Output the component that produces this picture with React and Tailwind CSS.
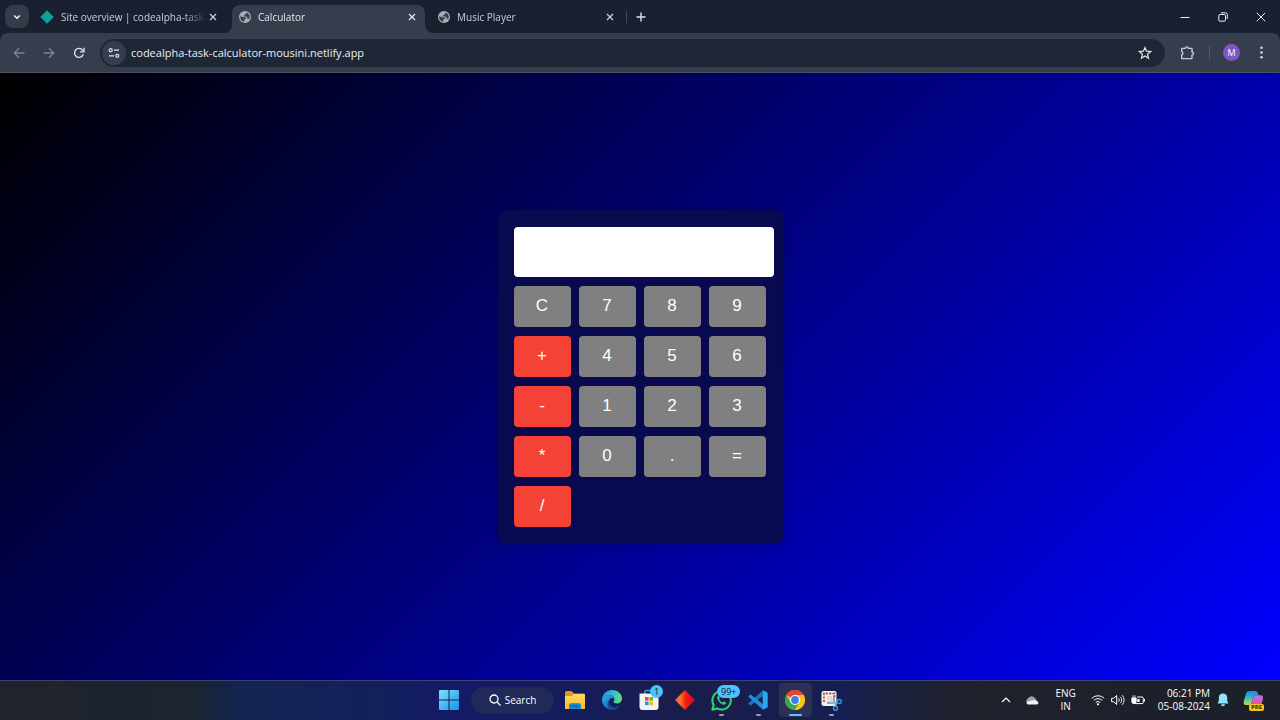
import React, { useState } from "react";

const Svg = ({ w = 16, h = w, box, className = "", children }) => (
  <svg width={w} height={h} viewBox={box || `0 0 ${w} ${h}`} fill="none" className={`shrink-0 ${className}`} aria-hidden="true">
    {children}
  </svg>
);

const GlobeIcon = () => (
  <Svg w={12}>
    <circle cx="6" cy="6" r="6" fill="#a9adb3" />
    <path d="M1.200 5.200 4 6.200h1.700c.8 0 1.200.6 1.200 1.200v.8H5.200v2.500C2.800 10.400 1.200 8.400 1.200 6zM7.500 1.500C7.500 2.700 7 3 6.200 3v.8c0 .5-.3.700-.8.700H4.600v1h2.800c.5 0 .8.3.8.8v1.200h.8c.6 0 .9.300 1 .8 1.300-1.800 1.100-5.300-2.500-6.800z" fill="#363e4d" />
  </Svg>
);

const NetlifyIcon = () => (
  <Svg w={14}>
    <path d="M7 .3 13.700 7 7 13.700.3 7z" fill="#0aa39a" />
  </Svg>
);

const CloseIcon = () => (
  <Svg w={8}>
    <path d="M1 1l6 6M7 1L1 7" stroke="currentColor" strokeWidth="1.300" />
  </Svg>
);

function Tab({ icon, title, active, className }) {
  return (
    <div
      className={
        active
          ? `relative flex h-7 items-center rounded-t-lg bg-[#363e4d] text-[#e3e6ec] ${className}`
          : `flex h-7 items-center text-[#c6cfe0] ${className}`
      }
    >
      {active && (
        <>
          <Svg w={8} className="absolute -left-2 bottom-0"><path d="M8 0v8H0a8 8 0 0 0 8-8z" fill="#363e4d" /></Svg>
          <Svg w={8} className="absolute -right-2 bottom-0"><path d="M0 0v8h8a8 8 0 0 1-8-8z" fill="#363e4d" /></Svg>
        </>
      )}
      <a href="#tab" className="flex min-w-0 flex-1 items-center gap-[7px] pb-1">
        {icon}
        <span className="min-w-0 flex-1 whitespace-nowrap [mask-image:linear-gradient(to_right,black_calc(100%-24px),transparent)]">{title}</span>
      </a>
      <button type="button" aria-label={`Close ${title}`} className="ml-[2px] pb-1">
        <CloseIcon />
      </button>
    </div>
  );
}

function TabStrip() {
  return (
    <div className="flex h-[33px] items-end bg-[#192130] pl-[5px] text-[10px] leading-4">
      <button type="button" aria-label="Search tabs" className="mb-[5px] flex h-[23px] w-6 items-center justify-center rounded-lg bg-[#343b49] text-white">
        <Svg w={8}><path d="M1.200 2.500 4 5.300l2.800-2.800" stroke="currentColor" strokeWidth="1.400" /></Svg>
      </button>
      <div className="ml-[9px] flex items-end">
        <Tab className="w-[194px] pr-[15px] pl-[2px]" icon={<NetlifyIcon />} title="Site overview | codealpha-task-" />
        <Tab className="w-[193px] pr-[9px] pl-[7px]" icon={<GlobeIcon />} title="Calculator" active />
        <Tab className="w-[194px] pr-[5px] pl-[13px]" icon={<GlobeIcon />} title="Music Player" />
      </div>
      <div className="mb-[10px] ml-[7px] h-3 w-px bg-[#414958]" />
      <button type="button" aria-label="New tab" className="mb-[11px] ml-[9px] text-[#dde3ee]">
        <Svg w={10}><path d="M5 .5v9M.5 5h9" stroke="currentColor" strokeWidth="1.400" /></Svg>
      </button>
      <div className="mb-[11px] ml-auto flex items-center gap-7 pr-[14px] text-[#eceef2]">
        <button type="button" aria-label="Minimize"><Svg w={10}><path d="M.5 5.500h9" stroke="currentColor" /></Svg></button>
        <button type="button" aria-label="Restore">
          <Svg w={10}><rect x=".8" y="2.500" width="6.700" height="6.700" rx="1.300" stroke="currentColor" /><path d="M3 .8h4.500A1.800 1.800 0 0 1 9.300 2.600V7" stroke="currentColor" /></Svg>
        </button>
        <button type="button" aria-label="Close window"><Svg w={10}><path d="M.8.8l8.400 8.400M9.200.8.8 9.200" stroke="currentColor" /></Svg></button>
      </div>
    </div>
  );
}

function Toolbar() {
  return (
    <div className="bg-[#192130]">
      <div className="flex h-10 items-center rounded-t-lg border-b border-[#4a5160] bg-[#363e4d] pr-4 pl-[13px]">
        <div className="flex items-center gap-[18px]">
          <button type="button" aria-label="Back" className="text-[#7d8490]"><Svg w={12}><path d="M11.500 6H1.500M6 1.300 1.300 6 6 10.700" stroke="currentColor" strokeWidth="1.300" /></Svg></button>
          <button type="button" aria-label="Forward" className="text-[#7d8490]"><Svg w={12}><path d="M.5 6h10M6 1.300 10.700 6 6 10.700" stroke="currentColor" strokeWidth="1.300" /></Svg></button>
          <button type="button" aria-label="Reload" className="text-[#dfe3ea]">
            <Svg w={12}><path d="M10.300 7.300A4.500 4.500 0 1 1 9.600 3.200l1 1.100" stroke="currentColor" strokeWidth="1.300" /><path d="M11 .8v4H7" stroke="currentColor" strokeWidth="1.300" /></Svg>
          </button>
        </div>
        <div className="ml-[15px] flex h-7 flex-1 items-center rounded-full bg-[#1f2736] pr-[13px] pl-[2px]">
          <button type="button" aria-label="Site information" className="flex size-6 items-center justify-center rounded-full bg-[#363e4d] text-[#dfe3ea]">
            <Svg w={12}>
              <path d="M6 3.200h5M1 8.800h5" stroke="currentColor" strokeWidth="1.300" />
              <circle cx="2.700" cy="3.200" r="1.500" stroke="currentColor" strokeWidth="1.200" />
              <circle cx="9.300" cy="8.800" r="1.500" stroke="currentColor" strokeWidth="1.200" />
            </Svg>
          </button>
          <input aria-label="Address" defaultValue="codealpha-task-calculator-mousini.netlify.app" className="ml-[5px] min-w-0 flex-1 bg-transparent text-[11px] leading-5 text-[#eceef3] outline-none" />
          <button type="button" aria-label="Bookmark this page" className="text-[#dfe3ea]">
            <Svg w={14}><path d="M7 1.500l1.600 3.700 4 .35-3.050 2.650.93 3.950L7 10.050 3.520 12.150l.93-3.950L1.400 5.550l4-.35z" stroke="currentColor" strokeWidth="1.200" /></Svg>
          </button>
        </div>
        <div className="ml-[15px] flex items-center">
          <button type="button" aria-label="Extensions" className="text-[#bfc9dc]">
            <Svg w={15}><path d="M1.700 3.400h3.600a1.500 1.500 0 0 1 3 0H12v3.600a1.500 1.500 0 0 1 0 3v3.600H1.700v-3.700a1.700 1.700 0 0 0 0-3.200z" stroke="currentColor" strokeWidth="1.400" strokeLinejoin="round" /></Svg>
          </button>
          <div className="ml-[14px] h-[14px] w-px bg-[#515a69]" />
          <button type="button" aria-label="Profile" className="ml-[13px] flex size-[17px] items-center justify-center rounded-full bg-[#7e57c2] text-[9px] leading-none text-white">M</button>
          <button type="button" aria-label="Chrome menu" className="ml-[19px] text-[#d5dbe8]">
            <Svg w={5} h={13}><circle cx="2.500" cy="1.700" r="1.300" fill="currentColor" /><circle cx="2.500" cy="6.500" r="1.300" fill="currentColor" /><circle cx="2.500" cy="11.300" r="1.300" fill="currentColor" /></Svg>
          </button>
        </div>
      </div>
    </div>
  );
}

const keys = ["C", "7", "8", "9", "+", "4", "5", "6", "-", "1", "2", "3", "*", "0", ".", "=", "/"];
const operators = ["+", "-", "*", "/"];

function calculate(expression) {
  const tokens = expression.match(/\d*\.?\d+|[-+*/]/g) || [];
  const out = [Number(tokens[0])];
  for (let i = 1; i < tokens.length; i += 2) {
    const n = Number(tokens[i + 1]);
    if (tokens[i] === "*") out.push(out.pop() * n);
    else if (tokens[i] === "/") out.push(out.pop() / n);
    else out.push(tokens[i] === "-" ? -n : n);
  }
  const total = out.reduce((a, b) => a + b, 0);
  return Number.isFinite(total) ? String(total) : "Error";
}

function Calculator() {
  const [value, setValue] = useState("");
  const press = (key) => {
    if (key === "C") setValue("");
    else if (key === "=") setValue(value ? calculate(value) : "");
    else setValue(value + key);
  };
  return (
    <div className="rounded-lg bg-[#09094f] py-[17px] pr-[9px] pl-4 font-['Liberation_Sans',sans-serif] shadow-[0_0_8px_rgba(0,0,0,0.15)]">
      <input aria-label="Result" readOnly value={value} className="block h-[50px] w-[260px] rounded bg-white px-2 text-right text-xl text-black outline-none" />
      <div className="mt-[9px] grid w-[252px] grid-cols-4 gap-x-2 gap-y-[9px]">
        {keys.map((key) => (
          <button
            key={key}
            type="button"
            onClick={() => press(key)}
            className={
              operators.includes(key)
                ? "h-[41px] rounded bg-[#f44336] text-[17px] leading-5 text-white"
                : "h-[41px] rounded bg-[#808080] text-[17px] leading-5 text-white"
            }
          >
            {key}
          </button>
        ))}
      </div>
    </div>
  );
}

const WindowsIcon = () => (
  <Svg w={20}>
    <defs><linearGradient id="win" x1="0" y1="0" x2="20" y2="20" gradientUnits="userSpaceOnUse"><stop stopColor="#7fe0fd" /><stop offset="1" stopColor="#1494e8" /></linearGradient></defs>
    <path d="M1 0h8.500v9.500H0V1a1 1 0 0 1 1-1zM10.500 0H19a1 1 0 0 1 1 1v8.500h-9.500zM0 10.500h9.500V20H1a1 1 0 0 1-1-1zM10.500 10.500H20V19a1 1 0 0 1-1 1h-8.500z" fill="url(#win)" />
  </Svg>
);

const FolderIcon = () => (
  <Svg w={22} h={20}>
    <defs><linearGradient id="fold" x1="0" y1="3" x2="0" y2="19" gradientUnits="userSpaceOnUse"><stop stopColor="#ffdc6a" /><stop offset="1" stopColor="#f8b928" /></linearGradient></defs>
    <path d="M1 2.500A1.500 1.500 0 0 1 2.500 1h5L10 3.500h10A1.200 1.200 0 0 1 21 4.700V9H1z" fill="#e19b12" />
    <path d="M1 6h7l2-2h10a1 1 0 0 1 1 1v14H1z" fill="url(#fold)" />
    <path d="M5 19v-4a1.800 1.800 0 0 1 1.800-1.800h8.400A1.800 1.800 0 0 1 17 15v4z" fill="#1687d0" />
    <path d="M7.500 16h7" stroke="#0a4f91" />
  </Svg>
);

const EdgeIcon = () => (
  <Svg w={20}>
    <defs>
      <linearGradient id="eg1" x1="1" y1="5" x2="20" y2="8" gradientUnits="userSpaceOnUse"><stop stopColor="#2597dc" /><stop offset=".55" stopColor="#35c1d5" /><stop offset="1" stopColor="#6be05a" /></linearGradient>
      <linearGradient id="eg2" x1="1" y1="8" x2="9" y2="20" gradientUnits="userSpaceOnUse"><stop stopColor="#299fe2" /><stop offset="1" stopColor="#1265bd" /></linearGradient>
    </defs>
    <path d="M0 10C0 4.200 4.600 0 10 0c6 0 10 4.200 10 8.500 0 3-2.400 5-5.200 5-2 0-3.300-.8-3.300-1.500 0-.6.9-.9.900-2.500C12.400 7.300 10 5 6.800 5 3.600 5 1 7 0 10z" fill="url(#eg1)" />
    <path d="M0 10c.5-3 3.200-5 6.300-5 3.100 0 5.400 1.700 6 3.600C10.600 7.500 7 8 7 12c0 4 3.700 7 8 6.500A10 10 0 0 1 0 10z" fill="url(#eg2)" />
    <path d="M7.500 9.500C5.600 14.500 10 18 14.500 17c1.600-.4 3-1.200 3.800-2.200A9.800 9.800 0 0 1 10 20C6 19.500 3.500 13 7.500 9.500z" fill="#124d92" />
  </Svg>
);

const StoreIcon = () => (
  <Svg w={20} h={22}>
    <path d="M6 5V2.700A1.200 1.200 0 0 1 7.200 1.500h5.600A1.200 1.200 0 0 1 14 2.700V5" stroke="#3f9ee0" strokeWidth="1.500" />
    <path d="M.5 4.500h19V18a3 3 0 0 1-3 3h-13a3 3 0 0 1-3-3z" fill="#f1f3f6" />
    <path d="M6 8h3.600v3.700H6z" fill="#f25022" /><path d="M10.400 8H14v3.700h-3.600z" fill="#7fba00" />
    <path d="M6 12.500h3.600v3.700H6z" fill="#00a4ef" /><path d="M10.400 12.500H14v3.700h-3.600z" fill="#ffb900" />
  </Svg>
);

const DiamondIcon = () => (
  <Svg w={20}>
    <defs><linearGradient id="dia" x1="0" y1="0" x2="20" y2="0" gradientUnits="userSpaceOnUse"><stop stopColor="#e93cac" /><stop offset=".25" stopColor="#ff7a1a" /><stop offset=".55" stopColor="#f51b12" /><stop offset="1" stopColor="#d9002a" /></linearGradient></defs>
    <path d="M10 0l10 10-10 10L0 10z" fill="url(#dia)" />
  </Svg>
);

const WhatsAppIcon = () => (
  <Svg w={21} box="0 0 24 24">
    <path d="M1.500 22.500 3 17A10.500 10.500 0 1 1 7 21z" stroke="#27d366" strokeWidth="2.400" strokeLinejoin="round" />
    <path d="M8 6.500c-2.600 2 .5 7 3.300 8.900 2.400 1.700 4.700 2.200 5.700-.2.300-.8.200-1.100-.3-1.300l-2.100-1-1.300 1.400c-1.700-.6-3-1.800-4-3.400l.9-1.300-.8-2.400c-.3-.7-.9-1-1.400-.7z" fill="#27d366" />
  </Svg>
);

const CodeIcon = () => (
  <Svg w={20}>
    <path d="M15 .3 19 2.200a1 1 0 0 1 .7 1v13.600a1 1 0 0 1-.7 1L15 19.700 14.600 6z" fill="#2aa7ee" />
    <path d="M15 .3v5.500L3 15.200a.8.800 0 0 1-1 0l-1.300-1.100a.8.800 0 0 1 0-1.200z" fill="#1677bd" />
    <path d="M15 19.700v-5.500L3 4.800a.8.800 0 0 0-1 0L.7 5.900a.8.800 0 0 0 0 1.200z" fill="#1d91dc" />
  </Svg>
);

const ChromeIcon = () => (
  <Svg w={20}>
    <circle cx="10" cy="10" r="10" fill="#fbc116" />
    <path d="M10 10 1.340 5A10 10 0 0 1 18.660 5H10z" fill="#ea4335" />
    <path d="M1.340 5A10 10 0 0 0 10 20l4.330-7.500L10 10 5.670 12.500z" fill="#34a853" />
    <path d="M10 5h8.660A10 10 0 0 1 10 20l4.330-7.500z" fill="#fbc116" />
    <circle cx="10" cy="10" r="5" fill="#fff" /><circle cx="10" cy="10" r="3.900" fill="#3b7ded" />
  </Svg>
);

const SnipIcon = () => (
  <Svg w={21}>
    <rect x=".5" y="1" width="15" height="15" rx="2" fill="#f2f2f3" />
    <path d="M3 12V3.500h10.500V7" stroke="#c9483b" strokeWidth="1.800" strokeDasharray="2.200 1.200" />
    <path d="M6 6h5.500v6.500H6z" fill="#d6d9df" />
    <path d="M6 13h7V6" stroke="#85888f" strokeWidth="1.600" />
    <path d="M9 13.500l8-1.500M13 10l2 6" stroke="#9cb3c9" strokeWidth="1.500" />
    <circle cx="18.300" cy="11.500" r="2" stroke="#2c9be6" strokeWidth="1.400" /><circle cx="14.500" cy="18.300" r="2" stroke="#2c9be6" strokeWidth="1.400" />
  </Svg>
);

const apps = [
  { name: "File Explorer", icon: <FolderIcon /> },
  { name: "Microsoft Edge", icon: <EdgeIcon /> },
  { name: "Microsoft Store", icon: <StoreIcon />, badge: "1" },
  { name: "Diamond", icon: <DiamondIcon /> },
  { name: "WhatsApp", icon: <WhatsAppIcon />, badge: "99+", running: true },
  { name: "Visual Studio Code", icon: <CodeIcon />, running: true },
  { name: "Google Chrome", icon: <ChromeIcon />, active: true },
  { name: "Snipping Tool", icon: <SnipIcon />, running: true },
];

function AppButton({ name, icon, badge, running, active }) {
  return (
    <button
      type="button"
      aria-label={name}
      className={active ? "relative flex h-[34px] w-[33px] items-center justify-center rounded bg-[#2b3054]" : "relative flex h-[34px] w-[33px] items-center justify-center rounded"}
    >
      {icon}
      {badge && (
        <span className={badge.length > 1 ? "absolute top-[2px] -right-[2px] flex h-[13px] w-[23px] items-center justify-center rounded-full bg-[#4cc2ff] text-[9px] leading-none text-[#101a2c]" : "absolute top-[2px] right-[2px] flex size-[13px] items-center justify-center rounded-full bg-[#4cc2ff] text-[9px] leading-none text-[#101a2c]"}>
          {badge}
        </span>
      )}
      {running && <span className="absolute bottom-[1px] h-[2px] w-[5px] rounded-full bg-[#9a9ca8]" />}
      {active && <span className="absolute bottom-[1px] h-[2px] w-[13px] rounded-full bg-[#5fc4f5]" />}
    </button>
  );
}

function Tray() {
  return (
    <div className="flex items-center justify-end pr-4 text-[10px] leading-[13px] text-white">
      <button type="button" aria-label="Show hidden icons"><Svg w={10}><path d="M1 7l4-4 4 4" stroke="currentColor" strokeWidth="1.200" /></Svg></button>
      <button type="button" aria-label="OneDrive" className="ml-[14px]">
        <Svg w={14} h={10}><path d="M3 9a3 3 0 0 1 0-5.500A4 4 0 0 1 10 3l2 2.500L4 9z" fill="#9da1a7" /><path d="M3.500 9.500C1.500 9.500 1 7 3 6.500l5-1.200a3 3 0 0 1 3.500.7c2.500.1 2.500 3.400.2 3.500z" fill="#f1f1f2" /></Svg>
      </button>
      <button type="button" className="ml-4 text-center">ENG<br />IN</button>
      <button type="button" aria-label="Network, volume and battery" className="ml-[15px] flex items-center gap-[6px]">
        <Svg w={14} h={12}><path d="M.8 4.300a8.800 8.800 0 0 1 12.400 0M2.800 6.400a6 6 0 0 1 8.400 0M4.800 8.500a3.100 3.100 0 0 1 4.400 0" stroke="currentColor" /><circle cx="7" cy="10.300" r="1.100" fill="currentColor" /></Svg>
        <Svg w={14} h={12}><path d="M.6 4.300h2L5.700 1.500v9L2.600 7.700h-2z" stroke="currentColor" strokeLinejoin="round" /><path d="M7.600 4.300a2.500 2.500 0 0 1 0 3.400M9.400 2.800a4.600 4.600 0 0 1 0 6.400M11.200 1.200a7 7 0 0 1 0 9.600" stroke="currentColor" strokeWidth=".9" /></Svg>
        <Svg w={14} h={12}><path d="M6 3h5a1.300 1.300 0 0 1 1.300 1.300v4A1.300 1.300 0 0 1 11 9.600H4" stroke="currentColor" /><path d="M13.500 5v2.500" stroke="currentColor" strokeWidth="1.200" /><path d="M.8 4h4.400v3.500a2.200 2.200 0 0 1-4.400 0zM2 1.300V4M4 1.300V4M6.500 5.500h1.800v2H6.500z" fill="currentColor" stroke="currentColor" strokeWidth=".8" /></Svg>
      </button>
      <button type="button" className="ml-[13px] text-right">06:21 PM<br />05-08-2024</button>
      <button type="button" aria-label="Notifications" className="ml-[7px]">
        <Svg w={12} h={14}><path d="M6 .5a4 4 0 0 1 4.200 4v3.300l1.300 2.700H.5l1.300-2.700V4.500A4 4 0 0 1 6 .5zM4 11.300h4a2 2 0 0 1-4 0z" fill="#8fe3fb" /></Svg>
      </button>
      <button type="button" aria-label="Copilot" className="relative ml-[14px]">
        <Svg w={21}>
          <defs>
            <linearGradient id="cp1" x1="4" y1="1" x2="4" y2="15" gradientUnits="userSpaceOnUse"><stop stopColor="#2c7be8" /><stop offset=".5" stopColor="#2ec0b8" /><stop offset="1" stopColor="#d9d93b" /></linearGradient>
            <linearGradient id="cp2" x1="15" y1="5" x2="15" y2="18" gradientUnits="userSpaceOnUse"><stop stopColor="#a77bf2" /><stop offset=".6" stopColor="#ec4fa5" /><stop offset="1" stopColor="#ff8a4c" /></linearGradient>
          </defs>
          <path d="M6 1h6.500c1.500 0 2 1 2.400 2.500l.6 1.800h-3c-1.300 0-1.800.7-2.200 2L8.500 13c-.4 1.300-1 2-2.300 2H3C.8 15 .2 13 .9 10.500L3.300 3C3.700 1.700 4.600 1 6 1z" fill="url(#cp1)" />
          <path d="M15 5.300h2.500c2.300 0 3 2 2.300 4.500l-2.200 7c-.4 1.400-1.300 2-2.600 2H9c-1.300 0-1.800-.8-2.200-2L6.200 15c1.300 0 1.900-.7 2.300-2l1.900-5.700c.4-1.300 1-2 2.200-2z" fill="url(#cp2)" />
        </Svg>
        <span className="absolute right-0 bottom-0 rounded-[2px] bg-[#ffc21a] px-[2px] text-[6px] leading-[7px] font-bold text-[#2b2413]">PRE</span>
      </button>
    </div>
  );
}

function Taskbar() {
  return (
    <footer className="grid h-10 grid-cols-[1fr_auto_1fr] items-center border-t border-[#3c4070] bg-[linear-gradient(to_right,#20232b_0%,#1b2430_15%,#112452_19%,#13205c_30%,#141b66_35%,#141c5c_45%,#1a1d4a_53%,#151f52_66%,#1c2038_71%,#1f212b_76%,#1c202b_100%)] pb-px">
      <div />
      <div className="flex items-center gap-[3px]">
        <button type="button" aria-label="Start" className="flex w-[38px] justify-center"><WindowsIcon /></button>
        <button type="button" className="flex h-[27px] w-[83px] items-center justify-center gap-1 rounded-full bg-[#1f2a58] text-[10px] leading-4 text-white">
          <Svg w={12}><circle cx="5" cy="5" r="4" stroke="currentColor" strokeWidth="1.300" /><path d="M8 8l3.500 3.500" stroke="currentColor" strokeWidth="1.300" /></Svg>
          Search
        </button>
        <div className="grid w-[293px] grid-cols-8 justify-items-center">
          {apps.map((app) => <AppButton key={app.name} {...app} />)}
        </div>
      </div>
      <Tray />
    </footer>
  );
}

export default function App() {
  return (
    <div className="flex min-h-screen flex-col font-['Open_Sans','Noto_Sans',sans-serif]">
      <header>
        <TabStrip />
        <Toolbar />
      </header>
      <main className="flex flex-1 items-center justify-center bg-[linear-gradient(135deg,#000000,#0000ff)]">
        <Calculator />
      </main>
      <Taskbar />
    </div>
  );
}
